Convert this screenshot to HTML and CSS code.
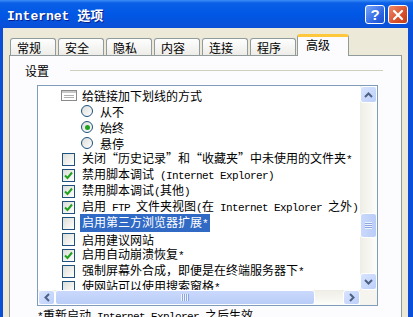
FILE: index.html
```html
<!DOCTYPE html>
<html lang="zh-CN">
<head>
    <meta charset="UTF-8">
    <meta name="viewport" content="width=device-width, initial-scale=1.0">
    <title>Internet 选项</title>
    <link rel="stylesheet" href="styles.css">
</head>
<body>
<div class="window">

    <!-- Barre de titre -->
    <div class="titlebar">
        <span class="title"><span class="title-en">Internet </span>选项</span>
        <div class="title-buttons">
            <span class="tbtn help">?</span>
            <span class="tbtn close">
                <svg width="12" height="12" viewBox="0 0 12 12"><path d="M2 2 L10 10 M10 2 L2 10" stroke="#fff" stroke-width="2.2" stroke-linecap="round"/></svg>
            </span>
        </div>
    </div>

    <div class="content">
        <!-- Onglets -->
        <div class="tabs">
            <div class="tab">常规</div>
            <div class="tab">安全</div>
            <div class="tab">隐私</div>
            <div class="tab">内容</div>
            <div class="tab">连接</div>
            <div class="tab">程序</div>
            <div class="tab active">高级</div>
        </div>

        <div class="panel">
            <div class="group-title"><span class="group-label">设置</span><div class="group-line"></div></div>

            <div class="listbox">
                <div class="list">
                    <div class="row folder">
                        <svg class="ico" width="16" height="11" viewBox="0 0 16 11">
                            <rect x="0.5" y="0.5" width="15" height="10" fill="#fff" stroke="#8a8a8a"/>
                            <rect x="1" y="1" width="14" height="2" fill="#c8c8c8"/>
                            <path d="M3 5.5 H13 M3 7.5 H13" stroke="#b0b0b0"/>
                        </svg>
                        <span class="label">给链接加下划线的方式</span>
                    </div>
                    <div class="row sub"><span class="radio"></span><span class="label">从不</span></div>
                    <div class="row sub"><span class="radio on"></span><span class="label">始终</span></div>
                    <div class="row sub"><span class="radio"></span><span class="label">悬停</span></div>
                    <div class="row"><span class="box"></span><span class="label">关闭“历史记录”和“收藏夹”中未使用的文件夹<span class="en">*</span></span></div>
                    <div class="row"><span class="box on"><svg width="11" height="11" viewBox="0 0 11 11"><path d="M2 5.5 L4.5 8 L9 2.5" fill="none" stroke="#21a121" stroke-width="2"/></svg></span><span class="label">禁用脚本调试<span class="en"> (Internet Explorer)</span></span></div>
                    <div class="row"><span class="box on"><svg width="11" height="11" viewBox="0 0 11 11"><path d="M2 5.5 L4.5 8 L9 2.5" fill="none" stroke="#21a121" stroke-width="2"/></svg></span><span class="label">禁用脚本调试<span class="en">(</span>其他<span class="en">)</span></span></div>
                    <div class="row"><span class="box on"><svg width="11" height="11" viewBox="0 0 11 11"><path d="M2 5.5 L4.5 8 L9 2.5" fill="none" stroke="#21a121" stroke-width="2"/></svg></span><span class="label">启用<span class="en"> FTP </span>文件夹视图<span class="en">(</span>在<span class="en"> Internet Explorer </span>之外<span class="en">)</span></span></div>
                    <div class="row"><span class="box"></span><span class="label sel">启用第三方浏览器扩展<span class="en">*</span></span></div>
                    <div class="row"><span class="box"></span><span class="label">启用建议网站</span></div>
                    <div class="row"><span class="box on"><svg width="11" height="11" viewBox="0 0 11 11"><path d="M2 5.5 L4.5 8 L9 2.5" fill="none" stroke="#21a121" stroke-width="2"/></svg></span><span class="label">启用自动崩溃恢复<span class="en">*</span></span></div>
                    <div class="row"><span class="box"></span><span class="label">强制屏幕外合成，即便是在终端服务器下<span class="en">*</span></span></div>
                    <div class="row"><span class="box"></span><span class="label">使网站可以使用搜索窗格<span class="en">*</span></span></div>
                </div>

                <!-- Barre de défilement verticale -->
                <div class="vscroll">
                    <span class="sbtn"><svg width="9" height="6" viewBox="0 0 9 6"><path d="M1 5 L4.5 1.5 L8 5" fill="none" stroke="#4d6185" stroke-width="2"/></svg></span>
                    <span class="vspace-top"></span>
                    <span class="vthumb"><span class="grip-h"></span></span>
                    <span class="vspace"></span>
                    <span class="sbtn"><svg width="9" height="6" viewBox="0 0 9 6"><path d="M1 1 L4.5 4.5 L8 1" fill="none" stroke="#4d6185" stroke-width="2"/></svg></span>
                </div>

                <!-- Barre de défilement horizontale -->
                <div class="hscroll">
                    <span class="sbtn"><svg width="6" height="9" viewBox="0 0 6 9"><path d="M5 1 L1.5 4.5 L5 8" fill="none" stroke="#4d6185" stroke-width="2"/></svg></span>
                    <span class="hthumb"><span class="grip-v"></span></span>
                    <span class="hspace"></span>
                    <span class="sbtn"><svg width="6" height="9" viewBox="0 0 6 9"><path d="M1 1 L4.5 4.5 L1 8" fill="none" stroke="#4d6185" stroke-width="2"/></svg></span>
                </div>
                <div class="corner"></div>
            </div>

            <div class="note"><span class="en">*</span>重新启动<span class="en"> Internet Explorer </span>之后生效</div>
        </div>
    </div>
</div>
</body>
</html>
```

FILE: styles.css
```css
* {
    box-sizing: border-box;
}
body {
    margin: 0;
    width: 413px;
    height: 317px;
    overflow: hidden;
    background-color: #ece9d8;
    font-family: "Noto Sans CJK SC", sans-serif;
    font-size: 12px;
    color: #000;
}
.window {
    display: flex;
    flex-direction: column;
    height: 317px;
}
.en {
    font-family: "Liberation Mono", monospace;
    font-size: 11px;
    letter-spacing: -0.6px;
}

/* Barre de titre */
.titlebar {
    height: 28px;
    flex: none;
    display: flex;
    align-items: center;
    padding: 1px 5px 0 7px;
    background: linear-gradient(#3d8ef8 0, #0b5fe6 3px, #0058e6 50%, #0a4ed6 100%);
}
.title {
    flex: 1;
    color: #fff;
    font-weight: bold;
    font-size: 13px;
    text-shadow: 1px 1px 0 #0a1e8a;
}
.title-en {
    font-family: "Liberation Mono", monospace;
    white-space: pre;
}
.title-buttons {
    display: flex;
    gap: 3px;
}
.tbtn {
    width: 20px;
    height: 19px;
    border: 1px solid #fff;
    border-radius: 3px;
    display: flex;
    align-items: center;
    justify-content: center;
    color: #fff;
}
.help {
    background: linear-gradient(135deg, #78a6fa, #2a5fe0 70%, #1d4fc9);
    font-family: "Liberation Sans", sans-serif;
    font-weight: bold;
    font-size: 15px;
}
.close {
    background: linear-gradient(135deg, #ec8a6c, #d9502c 60%, #c23c18);
}

/* Contenu */
.content {
    flex: 1;
    border-left: 3px solid #0b4fd9;
    border-right: 5px solid #0b4fd9;
    padding: 6px 6px 0;
    display: flex;
    flex-direction: column;
}
.tabs {
    display: flex;
    align-items: flex-end;
    height: 22px;
    padding-left: 1px;
    margin-bottom: -1px;
}
.tab {
    width: 46px;
    height: 18px;
    margin-right: 2px;
    padding-left: 6px;
    border: 1px solid #919b9c;
    border-bottom: none;
    border-radius: 3px 3px 0 0;
    background: linear-gradient(#fefefe, #ecebe6);
    line-height: 17px;
}
.tab.active {
    position: relative;
    width: 52px;
    height: 22px;
    margin-left: -1px;
    padding-left: 8px;
    border-top: 3px solid #ffc83c;
    background: #fcfcfe;
    line-height: 16px;
}
.panel {
    flex: 1;
    border: 1px solid #919b9c;
    background-color: #fcfcfe;
    padding: 6px 0 0 15px;
}
.group-title {
    display: flex;
    align-items: center;
    height: 16px;
}
.group-label {
    width: 45px;
}
.group-line {
    width: 313px;
    height: 1px;
    background-color: #d0d0bf;
}

/* Liste des options */
.listbox {
    margin: 7px 0 0 12px;
    width: 341px;
    height: 221px;
    border: 1px solid #7f9db9;
    background-color: #fff;
    display: grid;
    grid-template-columns: 1fr 17px;
    grid-template-rows: 1fr 15px;
}
.list {
    overflow: hidden;
    padding-top: 1px;
}
.row {
    display: flex;
    align-items: center;
    height: 16px;
    padding-left: 24px;
    white-space: pre;
}
.row.sub {
    padding-left: 43px;
}
.row.folder {
    padding-left: 23px;
}
.ico {
    flex: none;
    margin-right: 3px;
}
.label {
    padding: 0 2px;
    line-height: 15px;
}
.label.sel {
    background-color: #316ac5;
    color: #fff;
}
.box {
    flex: none;
    width: 13px;
    height: 13px;
    margin-right: 5px;
    border: 1px solid #1c5180;
    background: linear-gradient(135deg, #dcdcd7, #fff);
    display: flex;
    align-items: center;
    justify-content: center;
}
.radio {
    flex: none;
    width: 12px;
    height: 12px;
    margin-right: 5px;
    border: 1px solid #1c5180;
    border-radius: 50%;
    background: linear-gradient(135deg, #dcdcd7, #fff);
    display: flex;
    align-items: center;
    justify-content: center;
}
.radio.on::after {
    content: "";
    width: 5px;
    height: 5px;
    border-radius: 50%;
    background-color: #21a121;
}

/* Barres de défilement */
.vscroll {
    display: flex;
    flex-direction: column;
    background: linear-gradient(to right, #eeede5, #fdfdfa);
}
.hscroll {
    display: flex;
    background: linear-gradient(#eeede5, #fdfdfa);
}
.sbtn {
    flex: none;
    width: 17px;
    height: 17px;
    border: 1px solid #fff;
    border-radius: 3px;
    background: linear-gradient(135deg, #d8e4fe, #bccffa);
    display: flex;
    align-items: center;
    justify-content: center;
}
.hscroll .sbtn {
    height: 15px;
}
.vspace-top {
    height: 110px;
}
.vspace,
.hspace {
    flex: 1;
}
.vthumb {
    height: 25px;
    border: 1px solid #fff;
    border-radius: 3px;
    background: linear-gradient(to right, #cad8fc, #b9cdf8);
    display: flex;
    align-items: center;
    justify-content: center;
}
.grip-h {
    width: 7px;
    height: 7px;
    background: repeating-linear-gradient(#eef3fe 0, #eef3fe 1px, #8ca6e4 1px, #8ca6e4 2px);
}
.hthumb {
    width: 260px;
    border: 1px solid #fff;
    border-radius: 3px;
    background: linear-gradient(#cad8fc, #b9cdf8);
    display: flex;
    align-items: center;
    justify-content: center;
}
.grip-v {
    width: 8px;
    height: 7px;
    background: repeating-linear-gradient(to right, #eef3fe 0, #eef3fe 1px, #8ca6e4 1px, #8ca6e4 2px);
}
.corner {
    background-color: #f5f4ee;
}
.note {
    margin: 1px 0 0 12px;
    line-height: 16px;
    white-space: pre;
}
```
